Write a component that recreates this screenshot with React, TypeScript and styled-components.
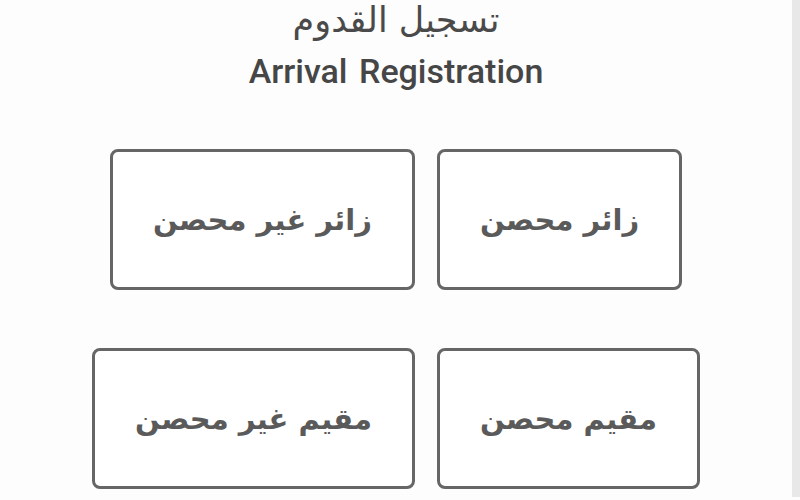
import React from "react";
import styled, { createGlobalStyle } from "styled-components";

const GlobalStyle = createGlobalStyle`
  html, body {
    margin: 0;
    padding: 0;
    background: #fdfdfd;
    font-family: Roboto, "DejaVu Sans", sans-serif;
  }
`;

const Page = styled.div`
  display: flex;
  width: 800px;
  height: 500px;
  overflow: hidden;
`;

const Content = styled.div`
  flex: 1;
  display: flex;
  flex-direction: column;
  align-items: center;
`;

const ScrollTrack = styled.div`
  width: 8px;
  height: 497px;
  background: #e8e8e8;
`;

const ArabicTitle = styled.h1`
  margin: 0;
  font-family: "DejaVu Sans", sans-serif;
  font-weight: normal;
  font-size: 35px;
  line-height: 40px;
  color: #4a4a4a;
  direction: rtl;
`;

const EnglishTitle = styled.h2`
  margin: 13px 0 0;
  font-family: Roboto, "Liberation Sans", sans-serif;
  font-weight: 500;
  font-size: 34px;
  line-height: 36px;
  word-spacing: 3px;
  color: #464646;
`;

const Row = styled.div<{ $top: number }>`
  display: flex;
  direction: rtl;
  justify-content: center;
  gap: 22px;
  margin-top: ${(p) => p.$top}px;
`;

const Choice = styled.button`
  height: 141px;
  padding: 0 40px;
  box-sizing: border-box;
  background: #fff;
  border: 3px solid #666;
  border-radius: 8px;
  font-family: "DejaVu Sans", sans-serif;
  font-weight: bold;
  font-size: 29px;
  color: #5a5a5a;
  direction: rtl;
  cursor: pointer;
`;

export default function App() {
  return (
    <Page>
      <GlobalStyle />
      <Content>
        <ArabicTitle>تسجيل القدوم</ArabicTitle>
        <EnglishTitle>Arrival Registration</EnglishTitle>
        <Row $top={60}>
          <Choice>زائر محصن</Choice>
          <Choice>زائر غير محصن</Choice>
        </Row>
        <Row $top={58}>
          <Choice>مقيم محصن</Choice>
          <Choice>مقيم غير محصن</Choice>
        </Row>
      </Content>
      <ScrollTrack />
    </Page>
  );
}
